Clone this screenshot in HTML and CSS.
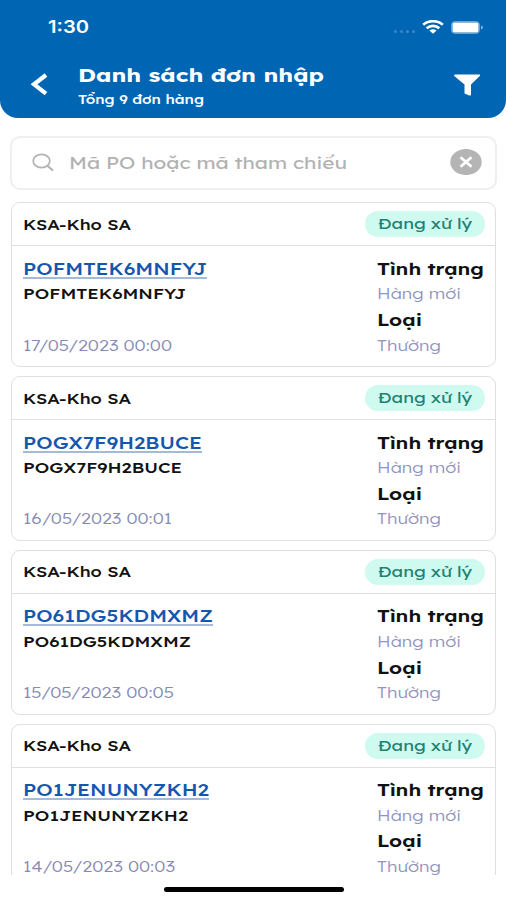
FILE: index.html
```html
<!DOCTYPE html>
<html lang="vi">
<head>
<meta charset="utf-8">
<title>Danh sách đơn nhập</title>
<link rel="stylesheet" href="styles.css">
</head>
<body>
<div class="screen">
  <header class="header">
    <div class="status">
      <span class="clock" data-w="41">1:30</span>
      <div class="indicators">
        <div class="dots"><i></i><i></i><i></i><i></i></div>
        <svg class="wifi" width="22" height="14" viewBox="0 0 22 14" fill="none" stroke="#fff" stroke-width="2.6"><path d="M1.2 4.8C6.5-.1 15.500-.1 20.800 4.800M4.700 8.300C8.300 5 13.700 5 17.300 8.300"/><path d="M7.400 10.600Q11 7.700 14.600 10.600L11 13.700Z" fill="#fff" stroke="none"/></svg>
        <svg class="battery" width="33" height="13" viewBox="0 0 33 13"><rect x=".7" y=".7" width="27.600" height="11.600" rx="3" fill="none" stroke="#fff" stroke-opacity=".5"/><rect x="1.500" y="1.500" width="26" height="10" rx="1.800" fill="#fff"/><path d="M30 4.500Q34 6.500 30 8.500Z" fill="#fff" opacity=".55"/></svg>
      </div>
    </div>
    <div class="nav">
      <svg class="back" width="18" height="24" viewBox="0 0 18 24" fill="none" stroke="#fff" stroke-width="4.200"><path d="M16 2 4 11.300l12 9.300"/></svg>
      <div class="titles">
        <h1 data-w="246">Danh sách đơn nhập</h1>
        <p data-w="126">Tổng 9 đơn hàng</p>
      </div>
      <svg class="filter" width="28" height="23" viewBox="0 0 28 23" fill="#fff"><path d="M2 .5H26.500Q27.700.700 26.800 1.900L18 10.500V20.500Q17.800 22 16.300 21.500L11.500 19.500V10.500L1.200 1.900Q.5.800 2 .5Z"/></svg>
    </div>
  </header>
  <main class="content">
    <div class="search">
      <svg width="23" height="20" viewBox="0 0 23 20" fill="none" stroke="#b3b3b3" stroke-width="1.700"><ellipse cx="9.500" cy="8" rx="8.300" ry="6.700"/><path d="m15 12.500 6 5" stroke-width="2.200"/></svg>
      <span class="placeholder" data-w="278">Mã PO hoặc mã tham chiếu</span>
      <svg class="clear" width="32" height="27" viewBox="0 0 32 27"><ellipse cx="16" cy="13" rx="15.700" ry="13" fill="#b4b4b4"/><path d="m10.500 8.200 11 9.600m0-9.600-11 9.600" stroke="#fff" stroke-width="2.800"/></svg>
    </div>
    <article class="card">
      <div class="card-head"><span class="store" data-w="108">KSA-Kho SA</span><span class="badge"><span data-w="94">Đang xử lý</span></span></div>
      <div class="card-body">
        <div class="order"><a class="code" data-w="184">POFMTEK6MNFYJ</a><span class="ref" data-w="163">POFMTEK6MNFYJ</span><time data-w="149">17/05/2023 00:00</time></div>
        <div class="meta"><b data-w="107">Tình trạng</b><span data-w="84">Hàng mới</span><b data-w="45">Loại</b><span data-w="64">Thường</span></div>
      </div>
    </article>
    <article class="card">
      <div class="card-head"><span class="store" data-w="108">KSA-Kho SA</span><span class="badge"><span data-w="94">Đang xử lý</span></span></div>
      <div class="card-body">
        <div class="order"><a class="code" data-w="179">POGX7F9H2BUCE</a><span class="ref" data-w="159">POGX7F9H2BUCE</span><time data-w="149">16/05/2023 00:01</time></div>
        <div class="meta"><b data-w="107">Tình trạng</b><span data-w="84">Hàng mới</span><b data-w="45">Loại</b><span data-w="64">Thường</span></div>
      </div>
    </article>
    <article class="card">
      <div class="card-head"><span class="store" data-w="108">KSA-Kho SA</span><span class="badge"><span data-w="94">Đang xử lý</span></span></div>
      <div class="card-body">
        <div class="order"><a class="code" data-w="190">PO61DG5KDMXMZ</a><span class="ref" data-w="168">PO61DG5KDMXMZ</span><time data-w="151">15/05/2023 00:05</time></div>
        <div class="meta"><b data-w="107">Tình trạng</b><span data-w="84">Hàng mới</span><b data-w="45">Loại</b><span data-w="64">Thường</span></div>
      </div>
    </article>
    <article class="card">
      <div class="card-head"><span class="store" data-w="108">KSA-Kho SA</span><span class="badge"><span data-w="94">Đang xử lý</span></span></div>
      <div class="card-body">
        <div class="order"><a class="code" data-w="186">PO1JENUNYZKH2</a><span class="ref" data-w="165">PO1JENUNYZKH2</span><time data-w="152">14/05/2023 00:03</time></div>
        <div class="meta"><b data-w="107">Tình trạng</b><span data-w="84">Hàng mới</span><b data-w="45">Loại</b><span data-w="64">Thường</span></div>
      </div>
    </article>
  </main>
  <footer class="home"><div class="home-bar"></div></footer>
</div>
<script src="script.js"></script>
</body>
</html>
```
FILE: script.js
```js
// Stretch each label horizontally to its display width.
document.querySelectorAll('[data-w]').forEach(function (el) {
  var ratio = Number(el.dataset.w) / el.getBoundingClientRect().width;
  el.style.transform = 'scaleX(' + ratio + ')';
});
```
FILE: styles.css
```css
* { box-sizing: border-box; }
body { margin: 0; background: #fff; font-family: Lexend, Inter, "Open Sans", sans-serif; color: #111; }
.screen { width: 506px; height: 900px; display: flex; flex-direction: column; overflow: hidden; background: #fff; }
[data-w] { display: block; width: max-content; white-space: nowrap; transform-origin: left center; }
h1, p { margin: 0; }

.header { flex: none; height: 118px; background: #0066b4; color: #fff; border-radius: 0 0 18px 18px; padding-top: 15px; }
.status { height: 24px; padding: 0 22px 0 48px; display: flex; align-items: center; justify-content: space-between; }
.clock { font-family: Inter, sans-serif; font-size: 17.500px; line-height: 24px; font-weight: 600; }
.indicators { display: flex; align-items: center; }
.dots { display: flex; gap: 3px; margin: 9px 7px 0 0; }
.dots i { width: 3px; height: 3px; border-radius: 50%; background: #3b87c4; }
.wifi { margin-right: 7px; }
.nav { display: flex; align-items: center; height: 44px; margin-top: 24px; padding: 0 25px 0 30px; }
.back { margin-right: 30px; }
.titles { flex: 1; height: 44px; }
.titles h1 { font-size: 19px; line-height: 25px; font-weight: 700; }
.titles p { font-size: 13.500px; line-height: 21px; font-weight: 500; }

.content { height: 757px; flex: none; overflow: hidden; padding: 17.500px 10px 0 11px; }
.search { height: 54px; margin: 0 -1px; display: flex; align-items: center; border: 2px solid #efefef; border-radius: 10px; padding: 0 13px 0 20px; }
.search .placeholder { margin: 0 0 0 14px; font-size: 17px; color: #b2b2b2; }
.search .clear { margin-left: auto; margin-top: -1px; }

.card { height: 165px; margin-top: 8.800px; border: 1px solid #dfdfdf; border-radius: 9px; }
.search + .card { margin-top: 12.900px; }
.card-head { height: 43px; display: flex; align-items: center; justify-content: space-between; padding: 0 10.500px 0 11px; border-bottom: 1px solid #dfdfdf; }
.store { font-size: 15px; font-weight: 500; }
.badge { width: 120px; height: 26px; border-radius: 13px; background: #cffaf0; color: #1d8273; padding-left: 13px; font-size: 15px; line-height: 26px; overflow: hidden; }
.card-body { display: flex; justify-content: space-between; padding: 9.500px 10px 0 11px; }
.order { display: flex; flex-direction: column; }
.code { font-size: 16.500px; line-height: 25.600px; font-weight: 500; color: #1557ad; text-decoration: underline; text-decoration-color: #a5badb; text-decoration-thickness: 2px; text-underline-offset: 2px; }
.ref { font-size: 15px; line-height: 25.600px; font-weight: 500; }
.order time { margin-top: 25.600px; font-size: 15px; line-height: 25.600px; font-weight: 300; color: #8589b3; }
.meta { width: 108px; }
.meta b { font-size: 16.500px; line-height: 25.600px; font-weight: 600; }
.meta span { font-size: 15px; line-height: 25.600px; font-weight: 300; color: #9194c0; }

.home { flex: 1; display: flex; justify-content: center; padding: 12px 0 0 1px; }
.home-bar { width: 180px; height: 5px; border-radius: 3px; background: #000; }
```
